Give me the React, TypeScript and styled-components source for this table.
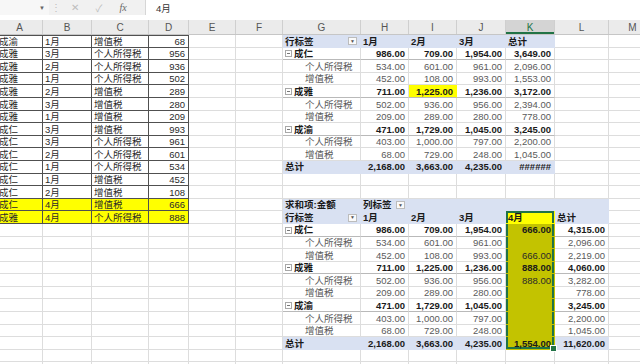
import React from "react";
import styled, { createGlobalStyle, css } from "styled-components";

const Global = createGlobalStyle`
  html, body { margin: 0; padding: 0; background: #ffffff; overflow: hidden; }
  body { font-family: "Liberation Sans", "Noto Sans CJK SC", sans-serif; }
`;

const COLS = [46, 49, 57, 40, 47, 47, 78, 48, 48, 49, 49, 54, 48, 60];
const LETTERS = ["A", "B", "C", "D", "E", "F", "G", "H", "I", "J", "K", "L", "M", "N"];
const TEMPLATE = COLS.map((w) => `${w}px`).join(" ");
const ROW_H = 12.6;
const ROWS = 27;

const BLUE = "#d9e1f2";
const YELLOW = "#ffff00";
const OLIVE = "#c3c300";
const GREEN = "#217346";
const GRID = "#dddddd";
const DARK = "#505050";

const Window = styled.div`
  width: 640px;
  height: 364px;
  overflow: hidden;
  background: #fff;
  display: flex;
  flex-direction: column;
`;

const FormulaBar = styled.div`
  display: flex;
  height: 15px;
  flex: none;
  background: #f1f1f1;
`;

const NameBox = styled.div`
  width: 49px;
  box-sizing: border-box;
  background: #f7f7f7;
  display: flex;
  align-items: center;
  justify-content: flex-end;
  padding-right: 4px;
  font-size: 6px;
  color: #666;
`;

const Tools = styled.div`
  width: 96px;
  display: flex;
  align-items: center;
  color: #bdbdbd;
  font-size: 10px;
`;

const Tool = styled.span<{ $w: number }>`
  width: ${(p) => p.$w}px;
  display: flex;
  justify-content: center;
  align-items: center;
`;

const Fx = styled.span`
  font-family: "Liberation Serif", serif;
  font-style: italic;
  font-size: 10px;
  color: #666;
`;

const Input = styled.div`
  flex: 1;
  background: #fff;
  border-left: 1px solid #d6d6d6;
  display: flex;
  align-items: center;
  padding-left: 10px;
  font-size: 9.5px;
  color: #333;
`;

const Viewport = styled.div`
  flex: 1;
  overflow: hidden;
  padding-top: 5px;
`;

const Sheet = styled.div`
  margin-left: -3px;
  display: flex;
  flex-direction: column;
`;

const HeaderRow = styled.div`
  display: grid;
  grid-template-columns: ${TEMPLATE};
  height: 15px;
  background: #ebebeb;
  border-bottom: 1px solid #c6c6c6;
  box-sizing: border-box;
`;

const ColHead = styled.div<{ $active?: boolean }>`
  display: flex;
  align-items: center;
  justify-content: center;
  font-size: 10px;
  color: ${(p) => (p.$active ? GREEN : "#555")};
  border-right: 1px solid #cfcfcf;
  box-sizing: border-box;
  ${(p) =>
    p.$active &&
    css`
      background: #d4d4d4;
      box-shadow: inset 0 -2px 0 ${GREEN};
    `}
`;

const Row = styled.div`
  display: grid;
  grid-template-columns: ${TEMPLATE};
  height: ${ROW_H}px;
  flex: none;
`;

type Sel = "top" | "mid" | "bot";

const selShadow = (s?: Sel) => {
  if (!s) return "none";
  const parts = [`inset 2px 0 0 ${GREEN}`, `inset -2px 0 0 ${GREEN}`];
  if (s === "top") parts.push(`inset 0 2px 0 ${GREEN}`);
  if (s === "bot") parts.push(`inset 0 -2px 0 ${GREEN}`);
  return parts.join(", ");
};

const Cell = styled.div<{
  $right?: boolean;
  $bold?: boolean;
  $fill?: string;
  $ind?: number;
  $dark?: boolean;
  $muted?: boolean;
  $sel?: Sel;
  $line?: "grp" | "tot";
  $topDark?: boolean;
}>`
  box-sizing: border-box;
  position: relative;
  display: flex;
  align-items: center;
  justify-content: ${(p) => (p.$right ? "flex-end" : "flex-start")};
  padding: 1px 3px 0 ${(p) => p.$ind ?? 2}px;
  font-size: 9.5px;
  line-height: 1;
  white-space: nowrap;
  overflow: ${(p) => (p.$sel === "bot" ? "visible" : "hidden")};
  font-weight: ${(p) => (p.$bold ? 700 : 400)};
  color: ${(p) => (p.$bold ? "#1a1a1a" : p.$muted ? "#5a5a5a" : "#2a2a2a")};
  background: ${(p) => p.$fill ?? "transparent"};
  border-right: 1px solid
    ${(p) => (p.$dark ? DARK : p.$fill ? "transparent" : GRID)};
  border-bottom: 1px solid
    ${(p) =>
      p.$dark
        ? DARK
        : p.$line === "grp"
        ? "#b9b9b9"
        : p.$fill
        ? "transparent"
        : GRID};
  border-top: ${(p) => (p.$topDark ? `1px solid ${DARK}` : "none")};
  box-shadow: ${(p) => selShadow(p.$sel)};
`;

const Dropdown = styled.span`
  margin-left: auto;
  width: 9px;
  height: 8px;
  box-sizing: border-box;
  border: 1px solid #bcbcbc;
  background: #fafafa;
  display: flex;
  align-items: center;
  justify-content: center;
  font-size: 5px;
  color: #555;
  font-weight: 400;
`;

const Collapse = styled.span`
  width: 7px;
  height: 7px;
  box-sizing: border-box;
  border: 1px solid #a8a8a8;
  margin-right: 2px;
  display: flex;
  align-items: center;
  justify-content: center;
  flex: none;
  &::after {
    content: "";
    width: 3px;
    height: 1px;
    background: #777;
  }
`;

const Handle = styled.span`
  position: absolute;
  right: -3px;
  bottom: -3px;
  width: 5px;
  height: 5px;
  background: ${GREEN};
  border: 1px solid #fff;
  z-index: 3;
`;

type Spec = {
  t?: string;
  right?: boolean;
  bold?: boolean;
  fill?: string;
  ind?: number;
  dark?: boolean;
  muted?: boolean;
  sel?: Sel;
  line?: "grp" | "tot";
  dd?: boolean;
  grp?: boolean;
  topDark?: boolean;
};

const fmt = (n: number | string | null) =>
  n === null
    ? ""
    : typeof n === "string"
    ? n
    : n.toLocaleString("en-US", { minimumFractionDigits: 2, maximumFractionDigits: 2 });

const grid: Spec[][] = Array.from({ length: ROWS }, () => COLS.map(() => ({})));
const put = (r: number, c: number, s: Spec) => {
  grid[r - 1][c] = { ...grid[r - 1][c], ...s };
};

// Source data
const source: [string, string, string, number][] = [
  ["成渝", "1月", "增值税", 68],
  ["成雅", "3月", "个人所得税", 956],
  ["成雅", "2月", "个人所得税", 936],
  ["成雅", "1月", "个人所得税", 502],
  ["成雅", "2月", "增值税", 289],
  ["成雅", "3月", "增值税", 280],
  ["成雅", "1月", "增值税", 209],
  ["成仁", "3月", "增值税", 993],
  ["成仁", "3月", "个人所得税", 961],
  ["成仁", "2月", "个人所得税", 601],
  ["成仁", "1月", "个人所得税", 534],
  ["成仁", "1月", "增值税", 452],
  ["成仁", "2月", "增值税", 108],
  ["成仁", "4月", "增值税", 666],
  ["成雅", "4月", "个人所得税", 888],
];
source.forEach(([a, b, c, d], i) => {
  const r = i + 1;
  const fill = r >= 14 ? YELLOW : undefined;
  const base = { dark: true, fill, topDark: r === 1 };
  put(r, 0, { ...base, t: a });
  put(r, 1, { ...base, t: b });
  put(r, 2, { ...base, t: c });
  put(r, 3, { ...base, t: String(d), right: true });
});

type Group = [string, (number | null)[], [string, (number | null)[]][]];

const pivot1: Group[] = [
  ["成仁", [986, 709, 1954, 3649], [["个人所得税", [534, 601, 961, 2096]], ["增值税", [452, 108, 993, 1553]]]],
  ["成雅", [711, 1225, 1236, 3172], [["个人所得税", [502, 936, 956, 2394]], ["增值税", [209, 289, 280, 778]]]],
  ["成渝", [471, 1729, 1045, 3245], [["个人所得税", [403, 1000, 797, 2200]], ["增值税", [68, 729, 248, 1045]]]],
];

const pivot2: Group[] = [
  ["成仁", [986, 709, 1954, 666, 4315], [["个人所得税", [534, 601, 961, null, 2096]], ["增值税", [452, 108, 993, 666, 2219]]]],
  ["成雅", [711, 1225, 1236, 888, 4060], [["个人所得税", [502, 936, 956, 888, 3282]], ["增值税", [209, 289, 280, null, 778]]]],
  ["成渝", [471, 1729, 1045, null, 3245], [["个人所得税", [403, 1000, 797, null, 2200]], ["增值税", [68, 729, 248, null, 1045]]]],
];

const layPivot = (
  top: number,
  groups: Group[],
  heads: string[],
  total: (number | string)[],
  special: (r: number, c: number) => Spec
) => {
  put(top, 6, { t: "行标签", dd: true, fill: BLUE, bold: true });
  heads.forEach((h, i) => put(top, 7 + i, { t: h, fill: BLUE, bold: true, ...special(top, 7 + i) }));
  let r = top + 1;
  groups.forEach(([name, vals, kids]) => {
    put(r, 6, { t: name, grp: true, bold: true, line: "grp" });
    vals.forEach((v, i) =>
      put(r, 7 + i, { t: fmt(v), right: true, bold: true, line: "grp", ...special(r, 7 + i) })
    );
    r++;
    kids.forEach(([kn, kv]) => {
      put(r, 6, { t: kn, ind: 22, muted: true });
      kv.forEach((v, i) => put(r, 7 + i, { t: fmt(v), right: true, muted: true, ...special(r, 7 + i) }));
      r++;
    });
  });
  put(r, 6, { t: "总计", fill: BLUE, bold: true });
  total.forEach((v, i) =>
    put(r, 7 + i, { t: fmt(v), right: true, bold: true, fill: BLUE, ...special(r, 7 + i) })
  );
};

layPivot(1, pivot1, ["1月", "2月", "3月", "总计"], [2168, 3663, 4235, "######"], (r, c) =>
  r === 5 && c === 8 ? { fill: YELLOW } : {}
);

// second pivot title row
put(14, 6, { t: "求和项:金额", fill: BLUE, bold: true });
put(14, 7, { t: "列标签", dd: true, fill: BLUE, bold: true });
[8, 9, 10, 11].forEach((c) => put(14, c, { fill: BLUE }));

layPivot(15, pivot2, ["1月", "2月", "3月", "4月", "总计"], [2168, 3663, 4235, 1554, 11620], (r, c) => {
  if (c !== 10) return {};
  if (r === 15) return { fill: YELLOW, sel: "top" as Sel };
  return { fill: OLIVE, sel: (r === 25 ? "bot" : "mid") as Sel, muted: false, line: undefined };
});

export default function App() {
  return (
    <>
      <Global />
      <Window>
        <FormulaBar>
          <NameBox>▼</NameBox>
          <Tools>
            <Tool $w={14}>⋮</Tool>
            <Tool $w={24}>✕</Tool>
            <Tool $w={24}>✓</Tool>
            <Tool $w={24}>
              <Fx>fx</Fx>
            </Tool>
          </Tools>
          <Input>4月</Input>
        </FormulaBar>
        <Viewport>
          <Sheet>
            <HeaderRow>
              {LETTERS.map((l) => (
                <ColHead key={l} $active={l === "K"}>
                  {l}
                </ColHead>
              ))}
            </HeaderRow>
            {grid.map((row, ri) => (
              <Row key={ri}>
                {row.map((s, ci) => (
                  <Cell
                    key={ci}
                    $right={s.right}
                    $bold={s.bold}
                    $fill={s.fill}
                    $ind={s.ind}
                    $dark={s.dark}
                    $muted={s.muted}
                    $sel={s.sel}
                    $line={s.line}
                    $topDark={s.topDark}
                  >
                    {s.grp && <Collapse />}
                    {s.t}
                    {s.dd && <Dropdown>▼</Dropdown>}
                    {s.sel === "bot" && <Handle />}
                  </Cell>
                ))}
              </Row>
            ))}
          </Sheet>
        </Viewport>
      </Window>
    </>
  );
}
